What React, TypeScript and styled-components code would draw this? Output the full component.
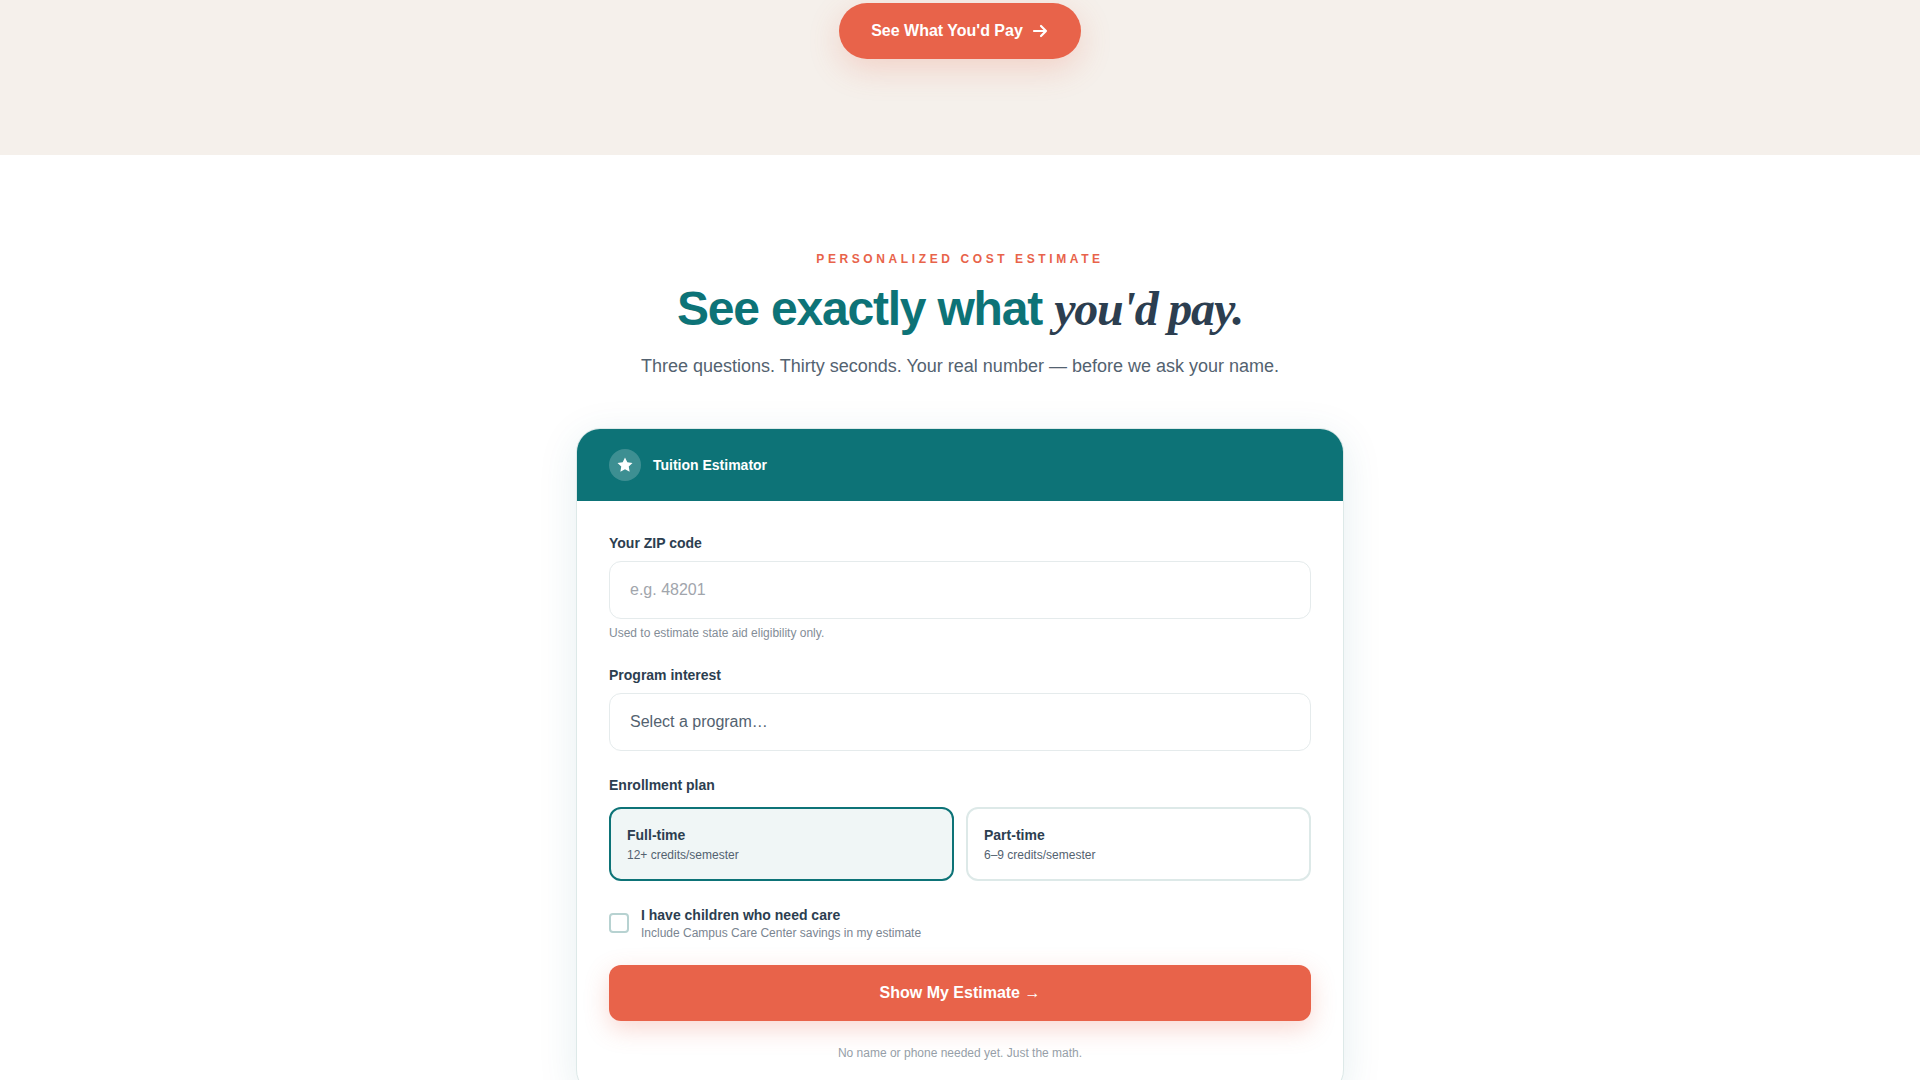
import React, { useState } from "react";
import styled, { createGlobalStyle } from "styled-components";

const color = {
  teal: "#0d7377",
  tealTint: "#f0f6f6",
  coral: "#e8634a",
  ink: "#2c3e50",
  slate: "#536270",
  sand: "#f5f0eb",
  line: "#dde9e8",
};

const GlobalStyle = createGlobalStyle`
  *, *::before, *::after { box-sizing: border-box; }
  body {
    margin: 0;
    background: #ffffff;
    color: ${color.ink};
    font-family: "Liberation Sans", Arial, sans-serif;
    font-size: 16px;
    line-height: 24px;
  }
  h2, p, fieldset { margin: 0; }
  button, input, select { font: inherit; color: inherit; }
`;

const CtaBand = styled.section`
  display: flex;
  justify-content: center;
  padding: 3px 24px 96px;
  background: ${color.sand};
`;

const CtaLink = styled.a`
  display: inline-flex;
  align-items: center;
  gap: 8px;
  padding: 16px 32px;
  border-radius: 28px;
  background: ${color.coral};
  box-shadow: 0 10px 32px rgba(232, 99, 74, 0.22);
  color: #ffffff;
  font-weight: 700;
  text-decoration: none;
`;

const EstimateSection = styled.section`
  display: flex;
  flex-direction: column;
  align-items: center;
  padding: 96px 24px;
`;

const Eyebrow = styled.p`
  color: ${color.coral};
  font-size: 12px;
  font-weight: 700;
  line-height: 16px;
  letter-spacing: 0.3em;
  text-transform: uppercase;
`;

const Title = styled.h2`
  margin: 16px 0 18px;
  color: ${color.teal};
  font-size: 48px;
  font-weight: 700;
  line-height: 52px;
  letter-spacing: -0.025em;
  text-align: center;

  em {
    color: ${color.ink};
    font-family: "Liberation Serif", "Times New Roman", serif;
  }
`;

const Lead = styled.p`
  margin-bottom: 48px;
  color: ${color.slate};
  font-size: 18px;
  line-height: 27px;
  text-align: center;
`;

const Card = styled.div`
  width: 100%;
  max-width: 768px;
  overflow: hidden;
  border: 1px solid ${color.line};
  border-radius: 24px;
  background: #ffffff;
  box-shadow: 0 8px 40px rgba(13, 100, 119, 0.1);
`;

const CardHeader = styled.header`
  display: flex;
  align-items: center;
  gap: 12px;
  padding: 20px 32px;
  background: ${color.teal};
  color: #ffffff;
  font-size: 14px;
  font-weight: 700;
  line-height: 20px;
`;

const Badge = styled.span`
  display: grid;
  place-items: center;
  width: 32px;
  height: 32px;
  border-radius: 50%;
  background: rgba(255, 255, 255, 0.2);
`;

const Form = styled.form`
  display: flex;
  flex-direction: column;
  gap: 24px;
  padding: 32px;
`;

const Field = styled.div`
  display: flex;
  flex-direction: column;
`;

const Label = styled.label`
  margin-bottom: 8px;
  font-size: 14px;
  font-weight: 700;
  line-height: 20px;
`;

const control = `
  width: 100%;
  height: 58px;
  padding: 16px 20px;
  border: 1px solid #e5ebec;
  border-radius: 12px;
  background: #ffffff;
  appearance: none;
`;

const TextInput = styled.input`
  ${control}
  &::placeholder { color: #a1a5ac; opacity: 1; }
`;

const Select = styled.select`
  ${control}
  color: ${color.slate};
`;

const Hint = styled.p`
  margin-top: 6px;
  color: #838d97;
  font-size: 12px;
  line-height: 16px;
`;

const PlanGroup = styled.fieldset`
  min-width: 0;
  padding: 0;
  border: 0;
`;

const Legend = styled.legend`
  margin-bottom: 12px;
  padding: 0;
  font-size: 14px;
  font-weight: 700;
  line-height: 20px;
`;

const PlanGrid = styled.div`
  display: grid;
  grid-template-columns: 1fr 1fr;
  gap: 12px;
`;

const PlanOption = styled.label<{ $selected: boolean }>`
  position: relative;
  display: flex;
  flex-direction: column;
  gap: 2px;
  padding: 16px;
  border: 2px solid ${(p) => (p.$selected ? color.teal : color.line)};
  border-radius: 12px;
  background: ${(p) => (p.$selected ? color.tealTint : "#ffffff")};
  cursor: pointer;
`;

const PlanRadio = styled.input`
  position: absolute;
  inset: 0;
  margin: 0;
  opacity: 0;
  cursor: pointer;
`;

const OptionTitle = styled.span`
  display: block;
  font-size: 14px;
  font-weight: 700;
  line-height: 20px;
`;

const OptionNote = styled.span<{ $muted?: boolean }>`
  display: block;
  color: ${(p) => (p.$muted ? "#7a8591" : color.slate)};
  font-size: 12px;
  line-height: 16px;
`;

const CareRow = styled.label`
  display: flex;
  align-items: center;
  gap: 12px;
  cursor: pointer;
`;

const CheckBox = styled.input`
  flex: none;
  width: 20px;
  height: 20px;
  margin: 0;
  border: 2px solid #b7d2d1;
  border-radius: 4px;
  background: #ffffff;
  appearance: none;

  &:checked {
    border-color: ${color.teal};
    background: ${color.teal};
  }
`;

const Submit = styled.button`
  width: 100%;
  padding: 16px 24px;
  border: 0;
  border-radius: 12px;
  background: ${color.coral};
  box-shadow: 0 8px 24px rgba(232, 99, 74, 0.25);
  color: #ffffff;
  font-weight: 700;
  cursor: pointer;
`;

const Footnote = styled.p`
  color: #969fa8;
  font-size: 12px;
  line-height: 16px;
  text-align: center;
`;

const ArrowIcon = () => (
  <svg
    width="18"
    height="18"
    viewBox="0 0 18 18"
    fill="none"
    stroke="currentColor"
    strokeWidth="2.2"
    strokeLinecap="round"
    strokeLinejoin="round"
    aria-hidden="true"
  >
    <path d="M3 9h12M10 4l5 5-5 5" />
  </svg>
);

const StarIcon = () => (
  <svg width="18" height="18" viewBox="0 0 24 24" fill="currentColor" aria-hidden="true">
    <path d="M12 2l3.09 6.26L22 9.27l-5 4.87 1.18 6.88L12 17.77l-6.18 3.25L7 14.14 2 9.27l6.91-1.01L12 2z" />
  </svg>
);

const plans = [
  { id: "full", title: "Full-time", note: "12+ credits/semester" },
  { id: "part", title: "Part-time", note: "6–9 credits/semester" },
];

export default function App() {
  const [plan, setPlan] = useState("full");

  return (
    <>
      <GlobalStyle />
      <main>
        <CtaBand>
          <CtaLink href="#estimate">
            See What You'd Pay
            <ArrowIcon />
          </CtaLink>
        </CtaBand>

        <EstimateSection id="estimate">
          <Eyebrow>Personalized Cost Estimate</Eyebrow>
          <Title>
            See exactly what <em>you'd pay.</em>
          </Title>
          <Lead>Three questions. Thirty seconds. Your real number — before we ask your name.</Lead>

          <Card>
            <CardHeader>
              <Badge>
                <StarIcon />
              </Badge>
              Tuition Estimator
            </CardHeader>

            <Form onSubmit={(e) => e.preventDefault()}>
              <Field>
                <Label htmlFor="zip">Your ZIP code</Label>
                <TextInput id="zip" type="text" inputMode="numeric" placeholder="e.g. 48201" />
                <Hint>Used to estimate state aid eligibility only.</Hint>
              </Field>

              <Field>
                <Label htmlFor="program">Program interest</Label>
                <Select id="program" defaultValue="">
                  <option value="">Select a program…</option>
                </Select>
              </Field>

              <PlanGroup>
                <Legend>Enrollment plan</Legend>
                <PlanGrid>
                  {plans.map((p) => (
                    <PlanOption key={p.id} $selected={plan === p.id}>
                      <PlanRadio
                        type="radio"
                        name="plan"
                        value={p.id}
                        checked={plan === p.id}
                        onChange={() => setPlan(p.id)}
                      />
                      <OptionTitle>{p.title}</OptionTitle>
                      <OptionNote>{p.note}</OptionNote>
                    </PlanOption>
                  ))}
                </PlanGrid>
              </PlanGroup>

              <CareRow>
                <CheckBox type="checkbox" name="care" />
                <span>
                  <OptionTitle>I have children who need care</OptionTitle>
                  <OptionNote $muted>Include Campus Care Center savings in my estimate</OptionNote>
                </span>
              </CareRow>

              <Submit type="submit">Show My Estimate →</Submit>
              <Footnote>No name or phone needed yet. Just the math.</Footnote>
            </Form>
          </Card>
        </EstimateSection>
      </main>
    </>
  );
}
